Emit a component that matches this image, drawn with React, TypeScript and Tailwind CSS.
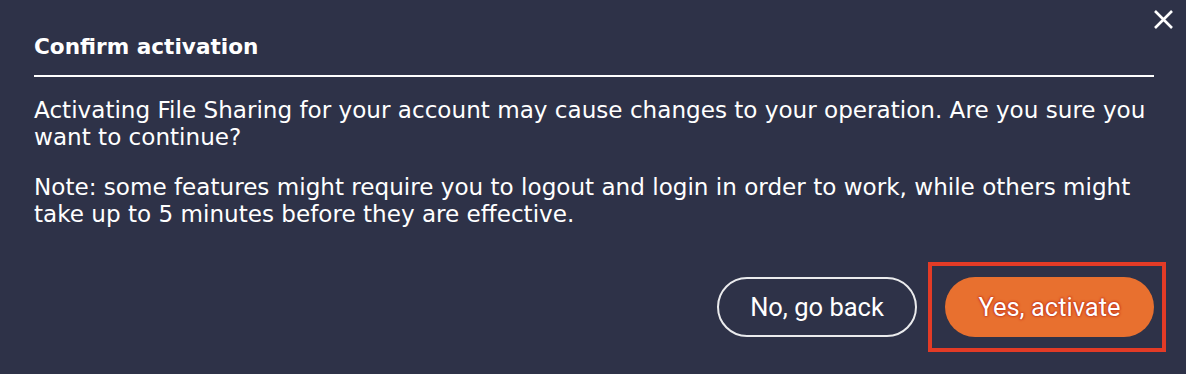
export default function App() {
  return (
    <div className="relative h-[374px] w-full bg-[#2e3248] text-white [font-family:'DejaVu_Sans',sans-serif]">
      <button className="absolute right-[12px] top-[8px] flex h-[22px] w-[22px] items-center justify-center text-white">
        <svg width="21" height="21" viewBox="0 0 21 21" fill="none" stroke="currentColor" strokeWidth="2.6">
          <path d="M2 2 L19 19 M19 2 L2 19" />
        </svg>
      </button>

      <div className="px-[34px] pr-[32px] pt-[33px]">
        <h2 className="border-b-2 border-white pb-[15px] text-[21.6px] font-bold leading-[27px]">
          Confirm activation
        </h2>

        <div className="pt-[20px] text-[23.1px] leading-[27px]">
          <p>
            Activating File Sharing for your account may cause changes to your operation. Are you sure you
            want to continue?
          </p>
          <p className="mt-[23px]">
            Note: some features might require you to logout and login in order to work, while others might
            take up to 5 minutes before they are effective.
          </p>
        </div>

        <div className="mt-[49px] flex justify-end gap-[28px] [font-family:Roboto,sans-serif]">
          <button className="h-[60px] w-[200px] rounded-full border-2 border-white/90 text-[25.5px] text-white">
            No, go back
          </button>
          <div className="relative">
            <button className="h-[60px] w-[209px] rounded-full bg-[#e8702f] text-[25.5px] text-white [text-shadow:0_0_2px_#c0301a,0_0_1px_#c0301a,0_0_3px_#c0301a]">
              Yes, activate
            </button>
            <div className="pointer-events-none absolute -bottom-[15px] -left-[17px] -right-[12px] -top-[15px] border-4 border-[#e33b26]" />
          </div>
        </div>
      </div>
    </div>
  );
}
